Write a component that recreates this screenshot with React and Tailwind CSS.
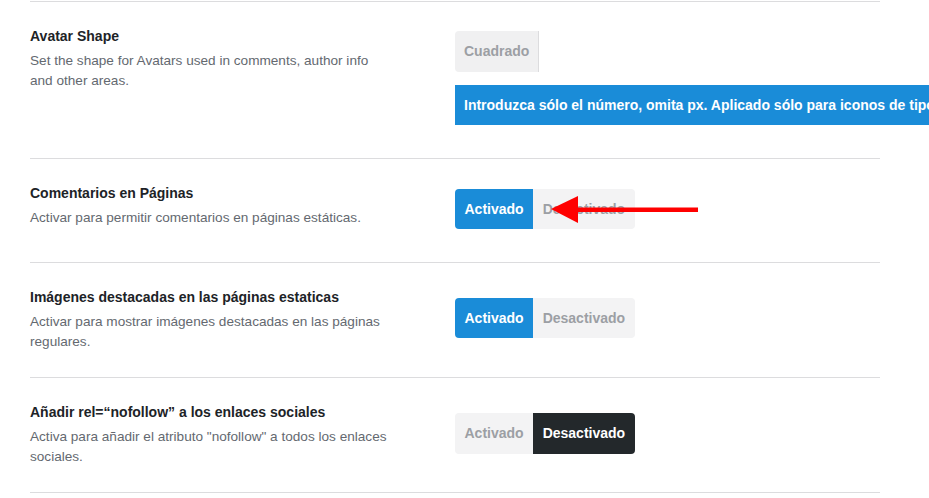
import React from "react";

const rows = [
  {
    title: "Comentarios en Páginas",
    desc: "Activar para permitir comentarios en páginas estáticas.",
    on: true,
    pt: "pt-[30px]",
    h: "h-[40px]",
  },
  {
    title: "Imágenes destacadas en las páginas estaticas",
    desc: "Activar para mostrar imágenes destacadas en las páginas regulares.",
    on: true,
    pt: "pt-[35px]",
    h: "h-[40px]",
  },
  {
    title: "Añadir rel=“nofollow” a los enlaces sociales",
    desc: 'Activa para añadir el atributo "nofollow" a todos los enlaces sociales.',
    on: false,
    pt: "pt-[35px]",
    h: "h-[41px]",
  },
];

function Toggle({ on, h }) {
  return (
    <div className={`flex ${h} rounded-[4px] overflow-hidden w-fit text-[14px] font-bold`}>
      <span
        className={`flex items-center px-[9.5px] ${
          on ? "bg-[#1a8cd8] text-white" : "bg-[#f3f3f4] text-[#9c9fa4]"
        }`}
      >
        Activado
      </span>
      <span
        className={`flex items-center px-[9.5px] ${
          on ? "bg-[#f3f3f4] text-[#9c9fa4]" : "bg-[#23282b] text-white"
        }`}
      >
        Desactivado
      </span>
    </div>
  );
}

function Label({ title, desc }) {
  return (
    <div className="w-[425px] shrink-0 pt-[24px] pb-[25px]">
      <h3 className="text-[14px] leading-[20px] font-semibold text-[#1d2327]">{title}</h3>
      <p className="mt-[5px] w-[361px] text-[13.6px] leading-[20px] text-[#646970]">{desc}</p>
    </div>
  );
}

export default function App() {
  return (
    <div
      className="relative w-screen h-screen overflow-hidden bg-white pt-px"
      style={{ fontFamily: '"Liberation Sans", Arial, sans-serif' }}
    >
      <div className="ml-[30px] w-[850px]">
        {/* avatar shape */}
        <div className="flex border-t border-[#dcdcde]">
          <Label
            title="Avatar Shape"
            desc="Set the shape for Avatars used in comments, author info and other areas."
          />
          <div className="pt-[29px] pb-[33px]">
            <div className="flex h-[41px] w-fit rounded-l-[4px] bg-[#f0f0f1] border-r border-[#dcdcde] items-center px-[9px] text-[14px] font-bold text-[#9c9fa4]">
              Cuadrado
            </div>
            <div className="mt-[13px] h-[40px] w-[620px] flex items-center px-[9px] bg-[#1a8cd8] text-white text-[14px] font-bold whitespace-nowrap">
              Introduzca sólo el número, omita px. Aplicado sólo para iconos de tipo fuente.
            </div>
          </div>
        </div>

        {rows.map((r) => (
          <div key={r.title} className="flex border-t border-[#dcdcde]">
            <Label title={r.title} desc={r.desc} />
            <div className={`${r.pt} pb-[33px]`}>
              <Toggle on={r.on} h={r.h} />
            </div>
          </div>
        ))}
        <div className="border-t border-[#dcdcde]" />
      </div>

      {/* red annotation arrow */}
      <svg
        className="absolute left-[545px] top-[190px]"
        width="160"
        height="40"
        viewBox="0 0 160 40"
      >
        <rect x="30" y="17.5" width="123" height="4.5" fill="#ff0000" />
        <polygon points="6,19 33,6 33,33" fill="#ff0000" />
      </svg>
    </div>
  );
}
